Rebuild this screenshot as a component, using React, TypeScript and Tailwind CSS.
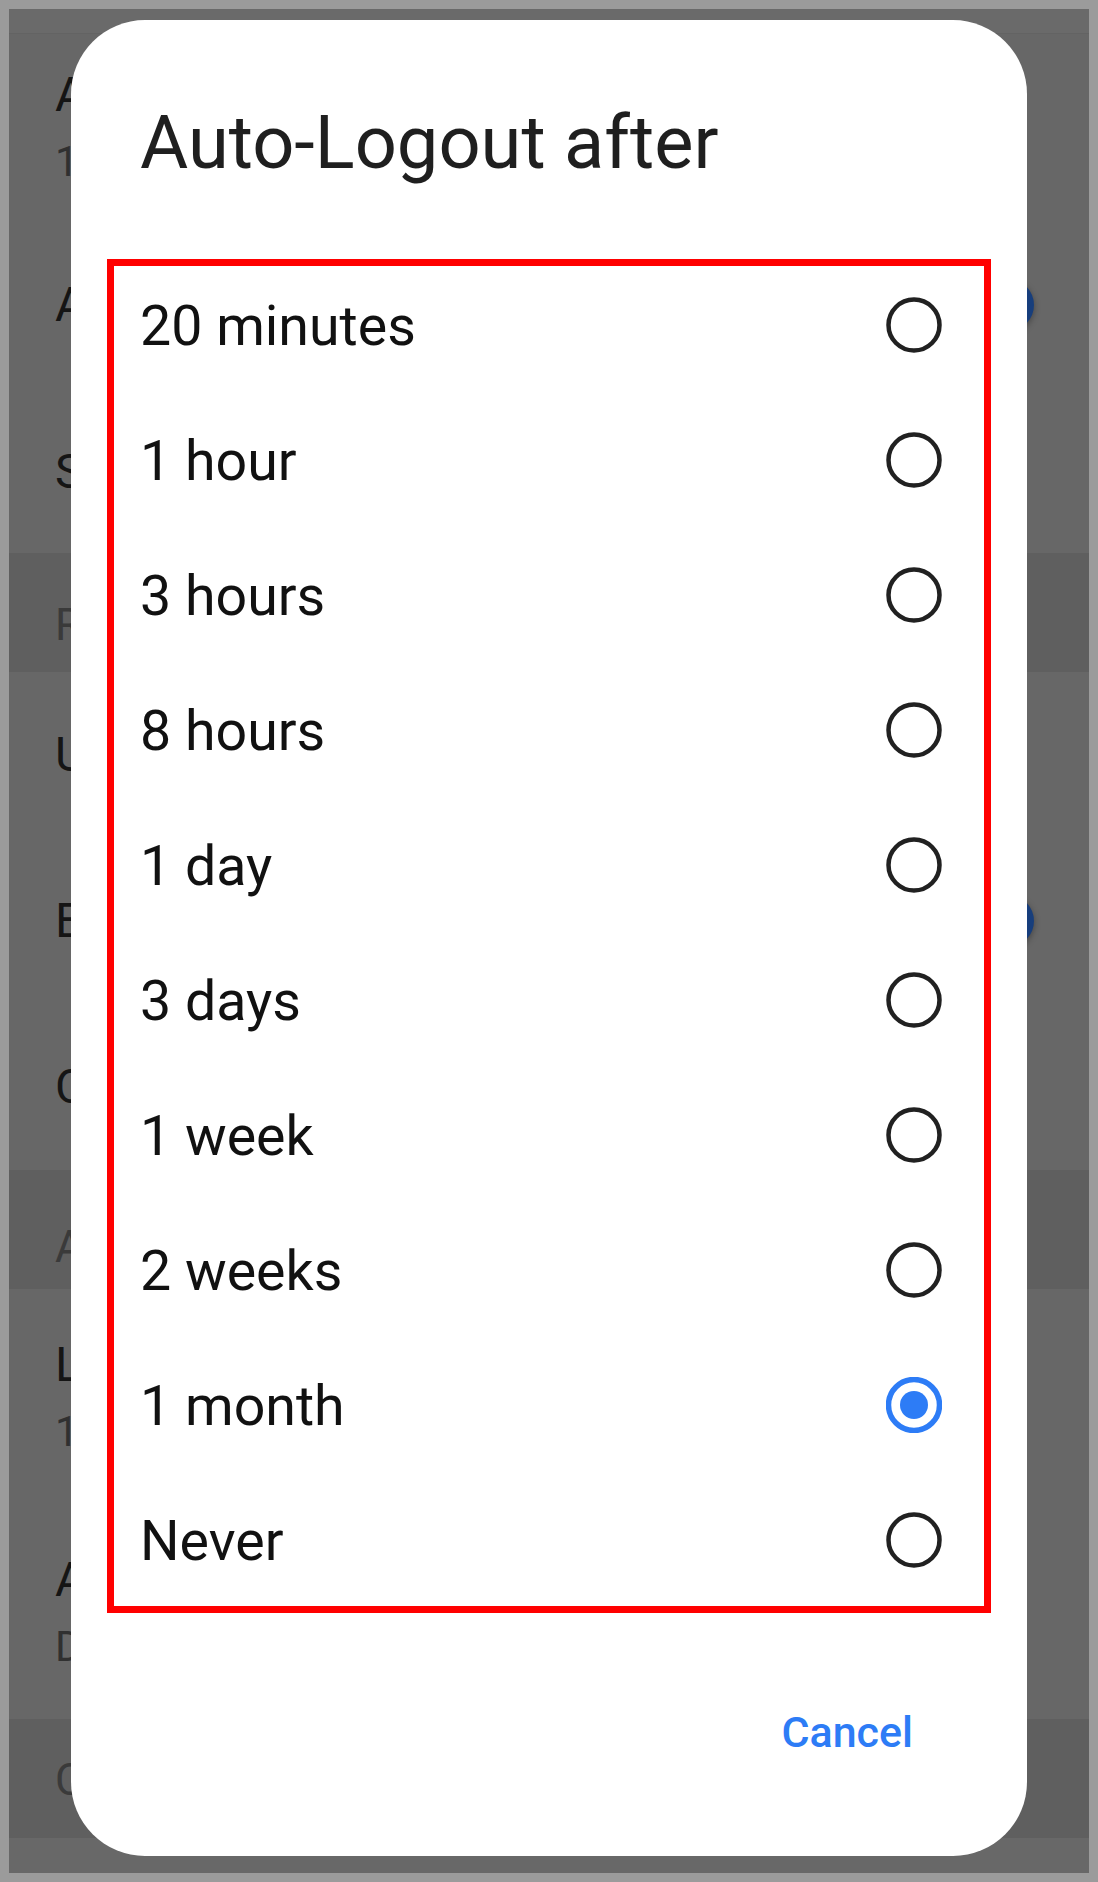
import React from 'react';

type Row = {
  title: string;
  sub?: string;
  toggle?: boolean;
  h: string;
};

// the settings screen dimmed behind the dialog: only the first letters show past its edge
const topRows: Row[] = [
  { title: 'A', sub: '1', h: 'h-[186px]' },
  { title: 'A', toggle: true, h: 'h-[170px]' },
  { title: 'S', h: 'h-[163px]' },
];

const midRows: Row[] = [
  { title: 'U', h: 'h-[166px]' },
  { title: 'E', toggle: true, h: 'h-[166px]' },
  { title: 'C', h: 'h-[166px]' },
];

const lowRows: Row[] = [
  { title: 'L', sub: '1', h: 'h-[215px]' },
  { title: 'A', sub: 'D', h: 'h-[215px]' },
];

const options = [
  '20 minutes',
  '1 hour',
  '3 hours',
  '8 hours',
  '1 day',
  '3 days',
  '1 week',
  '2 weeks',
  '1 month',
  'Never',
];

const SettingRow: React.FC<{ row: Row }> = ({ row }) => (
  <div className={`${row.h} flex items-center justify-between pl-[46px]`}>
    <div className="flex flex-col">
      <span className="text-[48px] leading-[58px] text-[#151515]">{row.title}</span>
      {row.sub && <span className="text-[42px] leading-[52px] mt-[12px] text-[#303030]">{row.sub}</span>}
    </div>
    {row.toggle && (
      <div className="mr-[55px] w-[52px] h-[52px] rounded-full bg-[#173e7c] shadow-[0_2px_6px_rgba(0,0,0,0.35)]" />
    )}
  </div>
);

const SectionHeader: React.FC<{ label: string; pt: string }> = ({ label, pt }) => (
  <div className={`h-[119px] bg-[#5f5f5f] pl-[46px] flex items-center ${pt}`}>
    <span className="text-[44px] leading-[52px] text-[#3a3a3a]">{label}</span>
  </div>
);

const Radio: React.FC<{ checked: boolean }> = ({ checked }) => (
  <svg width="56" height="56" viewBox="0 0 56 56">
    <circle
      cx="28"
      cy="28"
      r="25.5"
      fill="none"
      stroke={checked ? '#2d7cf6' : '#212121'}
      strokeWidth={checked ? 5.5 : 4.5}
    />
    {checked && <circle cx="28" cy="28" r="14" fill="#2d7cf6" />}
  </svg>
);

export default function App() {
  const selected = '1 month';

  return (
    <div className="w-[1098px] h-[1882px] bg-[#9b9b9b] p-[9px] font-['Roboto',sans-serif]">
      <div className="relative w-full h-full bg-[#676767] overflow-hidden">
        {/* status strip */}
        <div className="h-[25px] bg-[#6a6a6a] border-b border-[#636363]" />

        {topRows.map((r, i) => (
          <SettingRow key={i} row={r} />
        ))}
        <SectionHeader label="R" pt="pt-[24px]" />
        {midRows.map((r, i) => (
          <SettingRow key={i} row={r} />
        ))}
        <SectionHeader label="A" pt="pt-[34px]" />
        {lowRows.map((r, i) => (
          <SettingRow key={i} row={r} />
        ))}
        <SectionHeader label="C" pt="pt-[2px]" />
        <div className="h-[40px] bg-[#686868]" />

        {/* dialog */}
        <div className="absolute left-[62px] top-[11px] w-[956px] h-[1836px] bg-white rounded-[74px] flex flex-col">
          <h2 className="pt-[80px] pl-[69px] text-[74px] leading-[86px] font-normal text-[#1f1f1f]">
            Auto-Logout after
          </h2>

          <div className="mt-[73px] mx-[36px] border-[7px] border-[#ff0000] h-[1354px]">
            <div className="-mt-[9px]">
              {options.map((opt) => (
                <div key={opt} className="h-[135px] flex items-center justify-between pl-[26px] pr-[42px]">
                  <span className="text-[55.5px] leading-[64px] pt-[5px] text-[#111111]">{opt}</span>
                  <Radio checked={opt === selected} />
                </div>
              ))}
            </div>
          </div>

          <div className="mt-[94px] flex justify-end pr-[114px]">
            <button className="text-[43px] leading-[50px] font-medium text-[#2d7cf6]">Cancel</button>
          </div>
        </div>
      </div>
    </div>
  );
}
